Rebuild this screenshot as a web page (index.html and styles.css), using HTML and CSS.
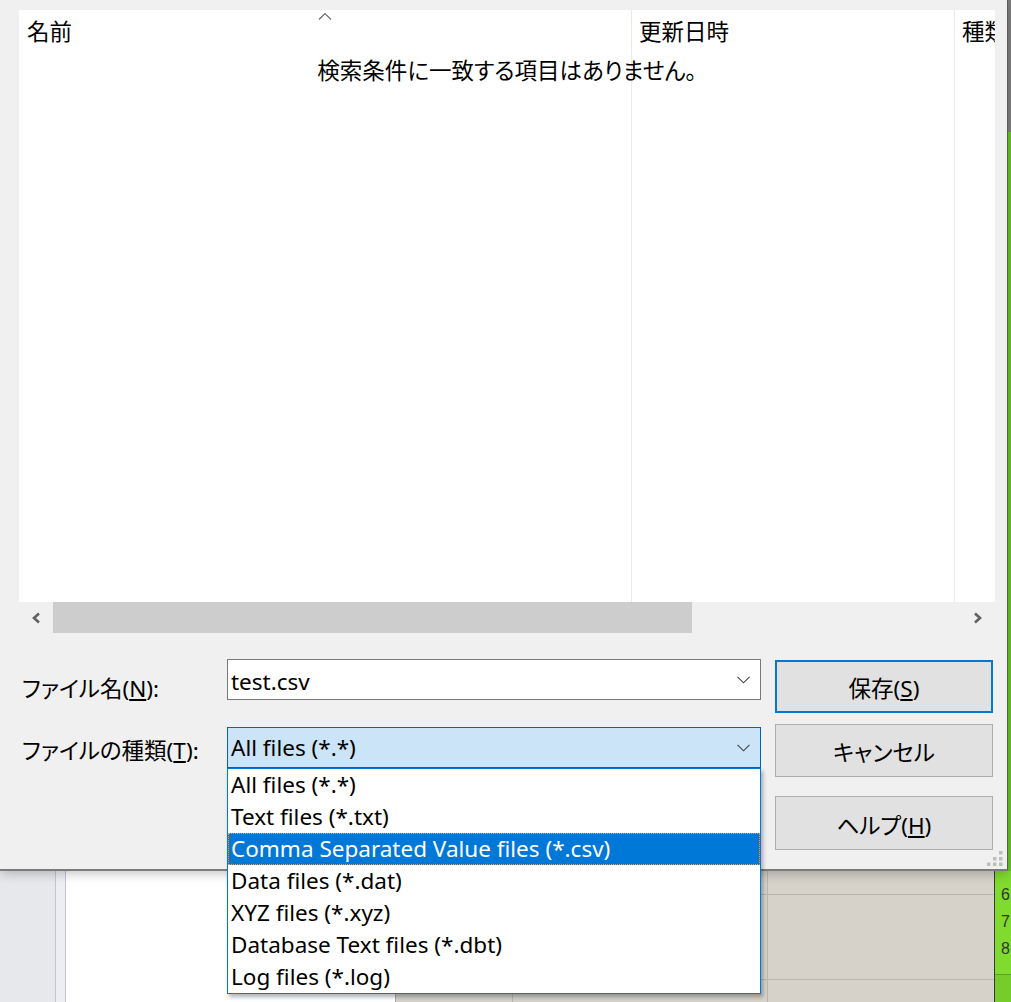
FILE: index.html
```html
<!DOCTYPE html>
<html lang="ja">
<head>
  <meta charset="UTF-8" />
  <meta name="viewport" content="width=device-width, initial-scale=1.0"/>
  <title>名前を付けて保存</title>
  <link rel="stylesheet" href="styles.css">
</head>
<body>

  <div class="screen">
    <div class="top">
      <div class="dialog">

        <div class="list-view">
          <div class="list-head">
            <div class="col-head col-name">
              名前
              <svg class="sort-arrow" width="14" height="8" viewBox="0 0 14 8"><polyline points="1,7.5 7,1.5 13,7.5" fill="none" stroke="#6d6d6d" stroke-width="1.2"/></svg>
            </div>
            <div class="col-head">更新日時</div>
            <div class="col-head">種類</div>
          </div>
          <p class="empty-msg">検索条件に一致する項目はありません。</p>
        </div>

        <div class="hscroll">
          <span class="scroll-btn">
            <svg width="10" height="12" viewBox="0 0 10 12"><polyline points="8,1.5 3,6 8,10.5" fill="none" stroke="#606060" stroke-width="2.6"/></svg>
          </span>
          <div class="scroll-track"><div class="scroll-thumb"></div></div>
          <span class="scroll-btn">
            <svg width="10" height="12" viewBox="0 0 10 12"><polyline points="2,1.5 7,6 2,10.5" fill="none" stroke="#606060" stroke-width="2.6"/></svg>
          </span>
        </div>

        <div class="file-form">
          <div class="fields">
            <div class="field-row row-name">
              <label class="field-label">ファイル名(<u>N</u>):</label>
              <div class="combo combo-edit">
                <span class="combo-text">test.csv</span>
                <svg class="chevron" width="13" height="8" viewBox="0 0 13 8"><polyline points="0.5,0.8 6.5,6.8 12.5,0.8" fill="none" stroke="#444" stroke-width="1.1"/></svg>
              </div>
            </div>
            <div class="field-row row-type">
              <label class="field-label">ファイルの種類(<u>T</u>):</label>
              <div class="select-wrap">
                <div class="combo combo-select">
                  <span class="combo-text">All files (*.*)</span>
                  <svg class="chevron" width="13" height="8" viewBox="0 0 13 8"><polyline points="0.5,0.8 6.5,6.8 12.5,0.8" fill="none" stroke="#444" stroke-width="1.1"/></svg>
                </div>
                <ul class="drop-list">
                  <li>All files (*.*)</li>
                  <li>Text files (*.txt)</li>
                  <li class="selected">Comma Separated Value files (*.csv)</li>
                  <li>Data files (*.dat)</li>
                  <li>XYZ files (*.xyz)</li>
                  <li>Database Text files (*.dbt)</li>
                  <li>Log files (*.log)</li>
                </ul>
              </div>
            </div>
          </div>

          <div class="buttons">
            <button class="btn btn-default">保存(<u>S</u>)</button>
            <button class="btn btn-cancel">キャンセル</button>
            <button class="btn btn-help">ヘルプ(<u>H</u>)</button>
          </div>
        </div>

        <svg class="grip" width="16" height="16" viewBox="0 0 16 16">
          <rect x="12" y="0" width="3.5" height="3.5" fill="#bdbdbd"/>
          <rect x="6" y="6" width="3.5" height="3.5" fill="#bdbdbd"/>
          <rect x="12" y="6" width="3.5" height="3.5" fill="#bdbdbd"/>
          <rect x="0" y="11.5" width="3.5" height="3.5" fill="#bdbdbd"/>
          <rect x="6" y="11.5" width="3.5" height="3.5" fill="#bdbdbd"/>
          <rect x="12" y="11.5" width="3.5" height="3.5" fill="#bdbdbd"/>
        </svg>
      </div>
      <div class="edge"></div>
    </div>

    <!-- window behind the dialog -->
    <div class="app">
      <div class="app-side"></div>
      <div class="app-gutter"></div>
      <div class="app-sheet"></div>
      <div class="app-grid">
        <div></div><div></div><div></div>
        <div></div><div></div><div></div>
        <div></div><div></div><div></div>
      </div>
      <div class="app-rows">
        <div class="row-num">6</div>
        <div class="row-num">7</div>
        <div class="row-num">8</div>
        <div class="row-rest"></div>
      </div>
    </div>
  </div>

</body>
</html>
```

FILE: styles.css
```css
:root {
  --dialog-bg: #f0f0f0;
  --accent: #0078d7;
  --line: #e3ebf5;
  --btn-bg: #e1e1e1;
}

body {
  margin: 0;
  overflow: hidden;
  font-family: 'Noto Sans', 'Noto Sans CJK JP', sans-serif;
  font-size: 22.5px;
  font-feature-settings: "palt";
  color: #000;
}

.screen {
  width: 1011px;
  height: 1002px;
  display: flex;
  flex-direction: column;
  background: #fff;
}

.top {
  display: flex;
  height: 871px;
}

.dialog {
  position: relative;
  z-index: 2;
  width: 1008px;
  height: 871px;
  box-sizing: border-box;
  padding-top: 10px;
  background: var(--dialog-bg);
  border-right: 1px solid #5b5b5b;
  border-bottom: 2px solid #7b7b7b;
  box-shadow: 0 3px 10px rgba(0, 0, 0, 0.22);
}

.edge {
  width: 3px;
  background: linear-gradient(#808080 0 132px, #6bc52b 132px);
}

/* file list */
.list-view {
  width: 976px;
  height: 592px;
  margin-left: 19px;
  overflow: hidden;
  background:
    linear-gradient(var(--line), var(--line)) 612px 0 / 1px 100% no-repeat,
    linear-gradient(var(--line), var(--line)) 935px 0 / 1px 100% no-repeat,
    #fff;
}

.list-head {
  display: grid;
  grid-template-columns: 612px 323px 60px;
  height: 44px;
  line-height: 44px;
}

.col-head {
  position: relative;
  padding-left: 8px;
  white-space: nowrap;
}

.sort-arrow {
  position: absolute;
  top: 2px;
  left: 299px;
}

.empty-msg {
  margin: 0;
  text-align: center;
  line-height: 32px;
  padding-top: 1px;
}

.hscroll {
  display: flex;
  width: 976px;
  height: 32px;
  margin-left: 19px;
}

.scroll-btn {
  width: 34px;
  display: flex;
  align-items: center;
  justify-content: center;
}

.scroll-track {
  flex: 1;
}

.scroll-thumb {
  width: 639px;
  height: 31px;
  background: #cdcdcd;
}

/* name / type form */
.file-form {
  display: flex;
  height: 235px;
}

.fields {
  width: 761px;
}

.field-row {
  display: flex;
  align-items: flex-start;
}

.row-name {
  margin-top: 25px;
}

.row-type {
  margin-top: 22px;
}

.field-label {
  width: 227px;
  box-sizing: border-box;
  padding-left: 22px;
  line-height: 32px;
}

.row-name .field-label {
  margin-top: 14px;
}

.row-type .field-label {
  margin-top: 8px;
}

.combo {
  width: 534px;
  height: 41px;
  box-sizing: border-box;
  border: 1px solid #7a7a7a;
  background: #fff;
  display: flex;
  align-items: center;
  justify-content: space-between;
  padding: 0 10px 1px 3px;
}

.combo-edit .combo-text {
  margin-top: 4px;
}

.combo-select {
  background: #cce4f7;
  border-color: #0064bf;
}

.chevron {
  margin-top: 2px;
}

.select-wrap {
  position: relative;
}

.drop-list {
  position: absolute;
  top: 41px;
  left: 0;
  z-index: 5;
  width: 534px;
  box-sizing: border-box;
  margin: 0;
  padding: 0;
  list-style: none;
  background: #fff;
  border: 1px solid var(--accent);
  box-shadow: 2px 3px 4px rgba(0, 0, 0, 0.3);
}

.drop-list li {
  height: 32px;
  line-height: 31px;
  padding-left: 3px;
  white-space: nowrap;
}

.drop-list li.selected {
  background: var(--accent);
  color: #fff;
  outline: 1px dotted #e6a35a;
  outline-offset: -1px;
}

.buttons {
  width: 218px;
  margin-left: 14px;
}

.btn {
  display: block;
  width: 218px;
  height: 53px;
  padding: 2px 0 0;
  border: 1px solid #adadad;
  background: var(--btn-bg);
  color: #000;
  font: inherit;
  font-feature-settings: "palt";
}

.btn-default {
  margin-top: 26px;
  border: 2px solid var(--accent);
}

.btn-cancel {
  margin-top: 11px;
}

.btn-help {
  margin-top: 19px;
  height: 54px;
}

.grip {
  position: absolute;
  right: 4px;
  bottom: 2px;
}

/* application behind the dialog */
.app {
  flex: 1;
  display: flex;
}

.app-side {
  width: 55px;
  background: #e7e8ec;
  border-right: 1px solid #c3c5d1;
}

.app-gutter {
  width: 9px;
  background: #eceef2;
  border-right: 1px solid #c3c5d1;
}

.app-sheet {
  width: 329px;
  background: #fff;
  border-right: 1px solid #a9a9a9;
}

.app-grid {
  flex: 1;
  display: grid;
  grid-template-columns: 116px 254px 1fr;
  grid-template-rows: 23px 84px 1fr;
  gap: 1px;
  background: #bab6ae;
}

.app-grid div {
  background: #d6d2ca;
}

.app-rows {
  width: 16px;
  border-left: 1px solid #3a3a3a;
  background: #7fdb2e;
  display: flex;
  flex-direction: column;
  padding-top: 10px;
  font-family: 'Liberation Sans', sans-serif;
  font-size: 16px;
  color: #333;
}

.row-num {
  height: 27px;
  line-height: 27px;
  padding-left: 6px;
}

.row-rest {
  flex: 1;
  margin-top: 12px;
  border-top: 1px solid #5aa623;
  background: #74cd2b;
}
```
